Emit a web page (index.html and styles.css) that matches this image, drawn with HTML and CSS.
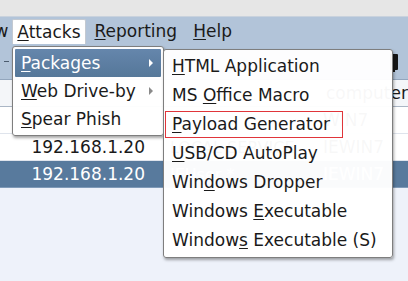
FILE: index.html
```html
<!DOCTYPE html>
<html lang="en">
<head>
    <meta charset="UTF-8">
    <title>Attacks menu</title>
    <link rel="stylesheet" href="styles.css">
</head>
<body>
    <div class="window">
        <div class="top-strip"></div>
        <div class="menubar">
            <span class="menu-title first">View</span>
            <span class="menu-title open"><u>A</u>ttacks</span>
            <span class="menu-title"><u>R</u>eporting</span>
            <span class="menu-title"><u>H</u>elp</span>
        </div>
        <div class="toolbar">
            <span class="tool-sep"></span>
            <span class="tool-faint"></span>
            <span class="tool-faint"></span>
            <span class="tool-faint"></span>
            <span class="tool-faint"></span>
            <span class="tool-faint cloud"></span>
            <span class="tool-dark"></span>
        </div>
        <div class="table">
            <div class="row header">
                <span class="col-ip"></span>
                <span class="col-user"></span>
                <span class="col-host">computer</span>
            </div>
            <div class="row">
                <span class="col-ip"></span>
                <span class="col-user"></span>
                <span class="col-host">WIN7</span>
            </div>
            <div class="row">
                <span class="col-ip">192.168.1.20</span>
                <span class="col-user">LOCAL SERVICE</span>
                <span class="col-host">IEWIN7</span>
            </div>
            <div class="row selected">
                <span class="col-ip">192.168.1.20</span>
                <span class="col-user">IEUser *</span>
                <span class="col-host">IEWIN7</span>
            </div>
            <div class="table-fill"></div>
        </div>
    </div>

    <div class="menu attacks-menu">
        <div class="menu-item active"><u>P</u>ackages<span class="arrow"></span></div>
        <div class="menu-item"><u>W</u>eb Drive-by<span class="arrow"></span></div>
        <div class="menu-item"><u>S</u>pear Phish</div>
    </div>

    <div class="menu packages-menu">
        <div class="menu-item"><u>H</u>TML Application</div>
        <div class="menu-item">MS <u>O</u>ffice Macro</div>
        <div class="menu-item marked"><u>P</u>ayload Generator</div>
        <div class="menu-item"><u>U</u>SB/CD AutoPlay</div>
        <div class="menu-item">Win<u>d</u>ows Dropper</div>
        <div class="menu-item">Windows <u>E</u>xecutable</div>
        <div class="menu-item">Window<u>s</u> Executable (S)</div>
    </div>
</body>
</html>
```

FILE: styles.css
```css
body {
    margin: 0;
    padding: 0;
    width: 408px;
    height: 281px;
    overflow: hidden;
    position: relative;
    font-family: "DejaVu Sans", sans-serif;
    font-size: 17px;
    color: #1a1a1a;
    background-color: #ffffff;
}

.window {
    display: flex;
    flex-direction: column;
    height: 281px;
}

.top-strip {
    height: 16px;
    background-color: #e6e6e6;
    border-bottom: 1px solid #c9d2dd;
}

.menubar {
    height: 27px;
    display: flex;
    align-items: center;
    background-color: #b2c4d9;
}

.menu-title {
    padding: 0 8px;
    line-height: 24px;
    white-space: nowrap;
}

.menu-title.first {
    margin-left: -40px;
    margin-right: -4px;
}

.menu-title.open {
    background-color: #ffffff;
    border: 1px solid #c3c9d1;
    border-bottom: none;
    border-radius: 2px 2px 0 0;
    padding: 0 5px 1px 4px;
    margin-top: 2px;
}

.toolbar {
    height: 35px;
    display: flex;
    align-items: center;
    gap: 30px;
    padding-left: 4px;
    background-color: #b2c4d9;
    border-bottom: 1px solid #93a6bd;
}

.tool-sep {
    width: 5px;
    height: 1px;
    background-color: #4b5b6e;
}

.tool-faint {
    width: 14px;
    height: 16px;
    border-radius: 2px;
    background-color: #a3b5ca;
}

.tool-faint.cloud {
    width: 20px;
    height: 10px;
    border-radius: 6px 6px 2px 2px;
    margin-left: 14px;
}

.tool-dark {
    width: 8px;
    height: 16px;
    margin-left: auto;
    margin-right: 10px;
    background-color: #151515;
    box-shadow: 0 5px 0 -3px #151515;
    border-radius: 1px;
}

.table {
    flex: 1;
    display: flex;
    flex-direction: column;
    background-color: #eef2fa;
}

.row {
    height: 26px;
    display: flex;
    align-items: center;
    background-color: #ffffff;
    border-bottom: 1px solid #dfe4ec;
    white-space: nowrap;
}

.row.header {
    background-color: #f4f6f9;
    border-bottom: 1px solid #aab6c5;
}

.row.selected {
    background-color: #587a9d;
    color: #ffffff;
    border-bottom: 1px solid #7f9ab8;
}

.col-ip {
    width: 145px;
    text-align: right;
}

.col-user {
    width: 150px;
    padding-left: 25px;
    font-size: 16px;
}

.col-host {
    padding-left: 3px;
}

.row.header .col-host {
    padding-left: 37px;
}

.table-fill {
    flex: 1;
    margin-bottom: 3px;
    background-color: #eef2fa;
}

.menu {
    position: absolute;
    background-color: rgba(255, 255, 255, 0.97);
    border: 1px solid #7e7e7e;
    border-radius: 3px;
    box-shadow: 1px 2px 3px rgba(0, 0, 0, 0.35);
    padding: 2px;
}

.attacks-menu {
    left: 12px;
    top: 46px;
    width: 146px;
}

.packages-menu {
    left: 163px;
    top: 49px;
    width: 224px;
    padding-top: 2px;
}

.menu-item {
    position: relative;
    height: 28px;
    line-height: 28px;
    padding-left: 6px;
    white-space: nowrap;
}

.packages-menu .menu-item {
    height: 29px;
    line-height: 29px;
    padding-left: 6px;
}

.menu-item.active {
    background: linear-gradient(#6586ac, #557799);
    color: #ffffff;
    border-radius: 1px;
}

.packages-menu .menu-item.marked {
    width: 170px;
    margin-left: -1px;
    padding-left: 6px;
    line-height: 25px;
    height: 25px;
    margin-top: 1px;
    margin-bottom: 1px;
    border: 1px solid #e0353a;
}

.arrow {
    position: absolute;
    right: 8px;
    top: 10px;
    border-left: 4px solid #8a8a8a;
    border-top: 4px solid transparent;
    border-bottom: 4px solid transparent;
}

.menu-item.active .arrow {
    border-left-color: #ffffff;
}

u {
    text-decoration-thickness: 1px;
    text-underline-offset: 2px;
}
```
